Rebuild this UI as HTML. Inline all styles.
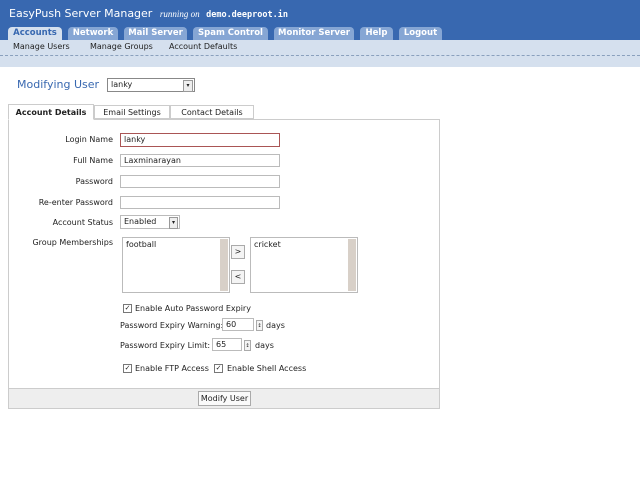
<!DOCTYPE html><html><head><style>
body{margin:0;width:640px;height:480px;background:#fff;font-family:"DejaVu Sans","Liberation Sans",sans-serif;font-size:8px;color:#222;position:relative;overflow:hidden}
.a{position:absolute;white-space:nowrap}
.hd{left:0;top:0;width:640px;height:40px;background:#3868b0}
.sub{left:0;top:40px;width:640px;height:27px;background:#d5e0ee}
.dash{left:0;top:55px;width:640px;border-top:1px dashed #8aa0bd}
.tab{top:27px;height:13px;background:#86a6d4;color:#fff;font-weight:bold;font-size:8.5px;text-align:center;line-height:13px;border-radius:4px 4px 0 0}
.inp{background:#fff;border:1px solid #bbb;height:12px;font-size:8px;line-height:12px;padding-left:3px;box-sizing:border-box}
.lbl{text-align:right;width:113px;left:0}
.cb{width:7px;height:7px;border:1px solid #777;background:#fff;font-size:7px;line-height:7px;text-align:center}
.btn{border:1px solid #aaa;background:#f4f4f4;text-align:center;box-sizing:border-box}
</style></head><body>
<div class="a hd"></div>
<div class="a" style="left:9px;top:7px;color:#fff;font-size:11px">EasyPush Server Manager <span style="font-family:'Liberation Serif',serif;font-style:italic;font-size:9px;margin-left:4px">running on</span> <span style="font-family:'DejaVu Sans Mono',monospace;font-weight:bold;font-size:8.5px;margin-left:3px">demo.deeproot.in</span></div>
<div class="a tab" style="left:8px;width:54px;background:#d5e0ee;color:#3868b0">Accounts</div>
<div class="a tab" style="left:68px;width:50px">Network</div>
<div class="a tab" style="left:124px;width:63px">Mail Server</div>
<div class="a tab" style="left:193px;width:75px">Spam Control</div>
<div class="a tab" style="left:274px;width:80px">Monitor Server</div>
<div class="a tab" style="left:360px;width:33px">Help</div>
<div class="a tab" style="left:399px;width:43px">Logout</div>
<div class="a sub"></div><div class="a dash"></div>
<div class="a" style="left:13px;top:42px">Manage Users</div>
<div class="a" style="left:90px;top:42px">Manage Groups</div>
<div class="a" style="left:169px;top:42px">Account Defaults</div>
<div class="a" style="left:17px;top:78px;color:#3868b0;font-size:11px">Modifying User</div>
<div class="a inp" style="left:107px;top:78px;width:88px;height:14px;border-color:#888">lanky<span style="position:absolute;right:1px;top:1px;width:8px;height:10px;border:1px solid #999;background:#eee;font-size:6px;line-height:10px;text-align:center">▾</span></div>
<div class="a" style="left:8px;top:119px;width:432px;height:290px;border:1px solid #ccc;box-sizing:border-box"></div>
<div class="a" style="left:8px;top:388px;width:432px;height:21px;background:#eee;border:1px solid #ccc;box-sizing:border-box"></div>
<div class="a" style="left:8px;top:104px;width:86px;height:16px;border:1px solid #ccc;border-bottom:1px solid #fff;background:#fff;font-weight:bold;text-align:center;line-height:16px;box-sizing:border-box">Account Details</div>
<div class="a" style="left:94px;top:105px;width:76px;height:14px;border:1px solid #ccc;text-align:center;line-height:14px;box-sizing:border-box">Email Settings</div>
<div class="a" style="left:170px;top:105px;width:84px;height:14px;border:1px solid #ccc;text-align:center;line-height:14px;box-sizing:border-box">Contact Details</div>
<div class="a lbl" style="top:135px">Login Name</div>
<div class="a inp" style="left:120px;top:133px;width:160px;height:14px;border-color:#a55">lanky</div>
<div class="a lbl" style="top:156px">Full Name</div>
<div class="a inp" style="left:120px;top:154px;width:160px;height:13px">Laxminarayan</div>
<div class="a lbl" style="top:177px">Password</div>
<div class="a inp" style="left:120px;top:175px;width:160px;height:13px"></div>
<div class="a lbl" style="top:198px">Re-enter Password</div>
<div class="a inp" style="left:120px;top:196px;width:160px;height:13px"></div>
<div class="a lbl" style="top:218px">Account Status</div>
<div class="a inp" style="left:120px;top:215px;width:60px;height:14px">Enabled<span style="position:absolute;right:1px;top:1px;width:7px;height:10px;border:1px solid #999;background:#eee;font-size:6px;line-height:10px;text-align:center">▾</span></div>
<div class="a lbl" style="top:238px">Group Memberships</div>
<div class="a inp" style="left:122px;top:237px;width:108px;height:56px;line-height:13px">football<span style="position:absolute;right:1px;top:1px;width:8px;height:52px;background:#d8d0c8"></span></div>
<div class="a inp" style="left:250px;top:237px;width:108px;height:56px;line-height:13px">cricket<span style="position:absolute;right:1px;top:1px;width:8px;height:52px;background:#d8d0c8"></span></div>
<div class="a btn" style="left:231px;top:245px;width:14px;height:14px;line-height:12px">&gt;</div>
<div class="a btn" style="left:231px;top:270px;width:14px;height:14px;line-height:12px">&lt;</div>
<div class="a cb" style="left:123px;top:304px">✓</div>
<div class="a" style="left:135px;top:304px">Enable Auto Password Expiry</div>
<div class="a" style="left:120px;top:321px">Password Expiry Warning:</div>
<div class="a inp" style="left:222px;top:318px;width:32px;height:13px">60</div>
<div class="a btn" style="left:256px;top:320px;width:7px;height:11px;font-size:5px;line-height:11px">↕</div>
<div class="a" style="left:266px;top:321px">days</div>
<div class="a" style="left:120px;top:341px">Password Expiry Limit:</div>
<div class="a inp" style="left:212px;top:338px;width:30px;height:13px">65</div>
<div class="a btn" style="left:244px;top:340px;width:7px;height:11px;font-size:5px;line-height:11px">↕</div>
<div class="a" style="left:255px;top:341px">days</div>
<div class="a cb" style="left:123px;top:364px">✓</div>
<div class="a" style="left:135px;top:364px">Enable FTP Access</div>
<div class="a cb" style="left:214px;top:364px">✓</div>
<div class="a" style="left:227px;top:364px">Enable Shell Access</div>
<div class="a btn" style="left:198px;top:391px;width:53px;height:15px;line-height:13px;background:#fafafa">Modify User</div>
</body></html>
